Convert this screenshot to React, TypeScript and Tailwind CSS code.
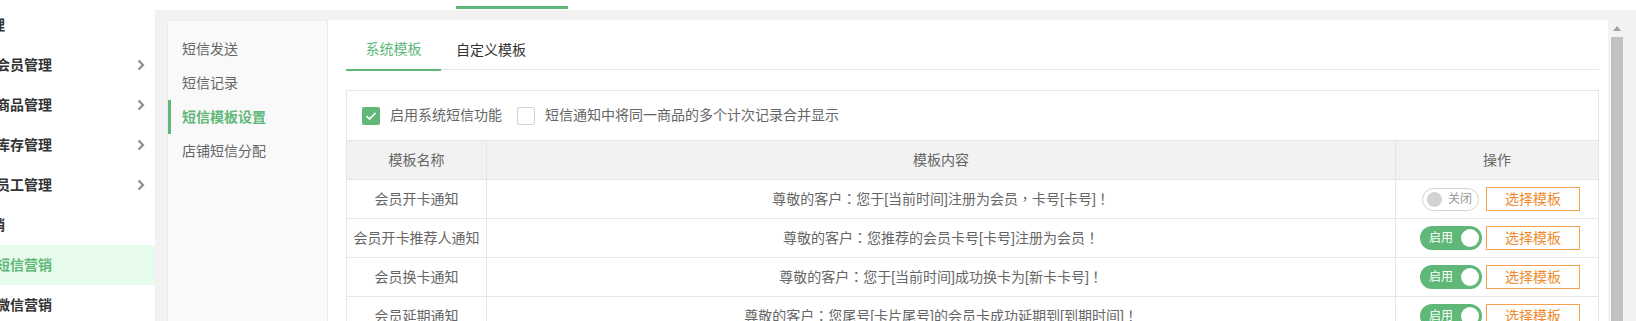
import React from "react";

const sideItems = [
  { label: "管理", kind: "head" },
  { label: "会员管理", kind: "item" },
  { label: "商品管理", kind: "item" },
  { label: "库存管理", kind: "item" },
  { label: "员工管理", kind: "item" },
  { label: "营销", kind: "head" },
  { label: "短信营销", kind: "active" },
  { label: "微信营销", kind: "plain" },
];

const subMenu = ["短信发送", "短信记录", "短信模板设置", "店铺短信分配"];

const rows = [
  { name: "会员开卡通知", content: "尊敬的客户：您于[当前时间]注册为会员，卡号[卡号]！", on: false },
  { name: "会员开卡推荐人通知", content: "尊敬的客户：您推荐的会员卡号[卡号]注册为会员！", on: true },
  { name: "会员换卡通知", content: "尊敬的客户：您于[当前时间]成功换卡为[新卡卡号]！", on: true },
  { name: "会员延期通知", content: "尊敬的客户：您尾号[卡片尾号]的会员卡成功延期到[到期时间]！", on: true },
];

// full-width punctuation is centred in the original font, TC glyphs do that
function Msg({ text }: { text: string }) {
  return (
    <span>
      {text.split(/([：，！])/).map((part, i) =>
        /^[：，！]$/.test(part) ? (
          <span key={i} className="font-['Noto_Sans_CJK_TC',sans-serif]">
            {part}
          </span>
        ) : (
          part
        )
      )}
    </span>
  );
}

function Chevron() {
  return (
    <svg width="8" height="12" viewBox="0 0 8 12" className="ml-auto">
      <polyline points="1.5,1.5 6,6 1.5,10.5" fill="none" stroke="#8c8c8c" strokeWidth="2.2" />
    </svg>
  );
}

function Toggle({ on }: { on: boolean }) {
  if (on) {
    return (
      <div className="mr-[4px] flex h-[24px] w-[62px] items-center justify-between rounded-full bg-[#5fb878] pl-[9px] pr-[3px]">
        <span className="text-[12px] text-white">启用</span>
        <span className="h-[18px] w-[18px] rounded-full bg-white" />
      </div>
    );
  }
  return (
    <div className="mr-[7px] flex h-[23px] w-[57px] items-center rounded-full border border-[#d2d2d2] bg-white pl-[4px] pr-[6px]">
      <span className="h-[15px] w-[15px] rounded-full bg-[#d2d2d2]" />
      <span className="ml-auto text-[12px] text-[#999]">关闭</span>
    </div>
  );
}

export default function App() {
  return (
    <div className="flex h-[321px] w-[1636px] overflow-hidden bg-white font-['Liberation_Sans','Noto_Sans_CJK_SC',sans-serif] text-[14px]">
      {/* left nav */}
      <aside className="w-[155px] shrink-0 overflow-hidden bg-white pt-[5px]">
        {sideItems.map((it) => (
          <div
            key={it.label}
            className={
              "flex h-[40px] items-center whitespace-nowrap pr-[10px] " +
              (it.kind === "active" ? "bg-[#e6fbeb] text-[#5fb878]" : "text-[#333]")
            }
          >
            <span className={"font-bold " + (it.kind === "head" ? "-ml-[23px]" : "-ml-[4px]")}>{it.label}</span>
            {it.kind === "item" && <Chevron />}
          </div>
        ))}
      </aside>

      <div className="flex min-w-0 flex-1 flex-col">
        <div className="h-[10px] shrink-0 pl-[301px]">
          <div className="mt-[6px] h-[3px] w-[112px] bg-[#5fb878]" />
        </div>

        <div className="flex flex-1 bg-[#f2f2f2] pl-[12px] pr-[11px] pt-[10px]">
          {/* sub menu */}
          <div className="w-[161px] shrink-0 border border-b-0 border-[#ebebeb] bg-[#f9f9f9] pt-[11px]">
            {subMenu.map((s, i) => (
              <div
                key={s}
                className={
                  "flex h-[34px] items-center border-l-[3px] pl-[11px] " +
                  (i === 2 ? "border-[#5fb878] font-bold text-[#5fb878]" : "border-transparent text-[#666]")
                }
              >
                {s}
              </div>
            ))}
          </div>

          {/* main */}
          <div className="min-w-0 flex-1 bg-white pl-[18px] pr-[9px] pt-[10px]">
            <div className="flex h-[40px] border-b border-[#e6e6e6]">
              <div className="-mb-px flex h-[41px] min-w-[95px] items-center justify-center border-b-2 border-[#5fb878] px-[15px] text-[#5fb878]">
                系统模板
              </div>
              <div className="flex h-[40px] items-center px-[15px] text-[#333]">自定义模板</div>
            </div>

            <div className="mt-[20px] border border-b-0 border-[#e6e6e6]">
              <div className="flex h-[50px] items-center border-b border-[#e6e6e6] pl-[15px] text-[#666]">
                <span className="flex h-[18px] w-[18px] items-center justify-center rounded-[2px] bg-[#5fb878]">
                  <svg width="12" height="10" viewBox="0 0 12 10">
                    <polyline points="1.5,5 4.5,8 10.5,2" fill="none" stroke="#fff" strokeWidth="1.6" />
                  </svg>
                </span>
                <span className="ml-[10px]">启用系统短信功能</span>
                <span className="ml-[15px] h-[18px] w-[18px] rounded-[2px] border border-[#d2d2d2] bg-white" />
                <span className="ml-[10px]">短信通知中将同一商品的多个计次记录合并显示</span>
              </div>

              <div className="grid grid-cols-[140px_1fr_202px] text-[#666]">
                <div className="flex h-[39px] items-center justify-center border-b border-r border-[#e6e6e6] bg-[#f2f2f2]">模板名称</div>
                <div className="flex h-[39px] items-center justify-center border-b border-r border-[#e6e6e6] bg-[#f2f2f2]">模板内容</div>
                <div className="flex h-[39px] items-center justify-center border-b border-[#e6e6e6] bg-[#f2f2f2]">操作</div>
                {rows.map((r) => (
                  <React.Fragment key={r.name}>
                    <div className="flex h-[39px] items-center justify-center whitespace-nowrap border-b border-r border-[#e6e6e6]">{r.name}</div>
                    <div className="flex h-[39px] items-center justify-center border-b border-r border-[#e6e6e6]">
                      <Msg text={r.content} />
                    </div>
                    <div className="flex h-[39px] items-center justify-end border-b border-[#e6e6e6] pr-[18px]">
                      <Toggle on={r.on} />
                      <div className="flex h-[24px] w-[94px] items-center justify-center border border-[#f3a14f] text-[#ef8b2c]">
                        选择模板
                      </div>
                    </div>
                  </React.Fragment>
                ))}
              </div>
            </div>
          </div>

          {/* scrollbar */}
          <div className="flex w-[17px] shrink-0 flex-col bg-[#f3f3f3]">
            <div className="flex h-[17px] items-center justify-center">
              <svg width="8" height="5" viewBox="0 0 8 5">
                <polygon points="0,5 4,0 8,5" fill="#a3a3a3" />
              </svg>
            </div>
            <div className="ml-[3px] mr-[2px] flex-1 bg-[#c1c1c1]" />
          </div>
        </div>
      </div>
    </div>
  );
}
